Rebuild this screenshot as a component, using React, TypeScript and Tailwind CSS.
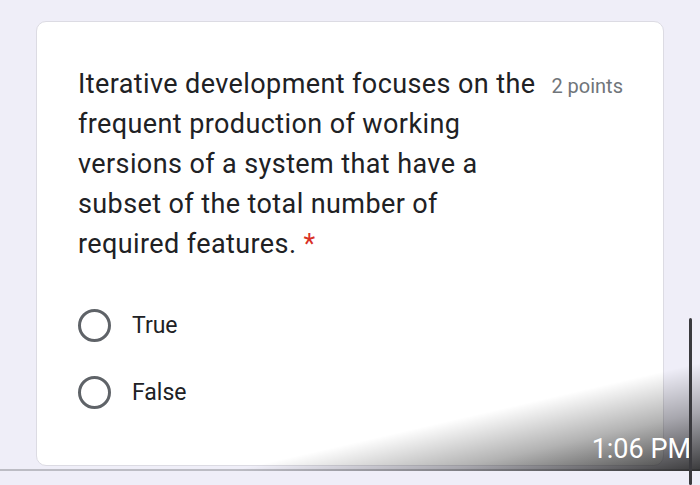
export default function App() {
  const options = ['True', 'False'];

  return (
    <div className="relative w-[700px] h-[485px] overflow-hidden bg-[#efeef8] font-['Roboto',sans-serif]">
      <div className="h-[471px] border-b-2 border-[#bcbcc4] px-[36px] pt-[21px] pb-[3px]">
        <div className="h-full rounded-[10px] border border-[#dcdbe3] bg-white pl-[41px] pr-[40px] pt-[42px]">
          <div className="flex items-baseline justify-between">
            <p className="text-[27px] leading-[40px] tracking-[0.4px] text-[#202124]">
              Iterative development focuses on the
              <br />
              frequent production of working
              <br />
              versions of a system that have a
              <br />
              subset of the total number of
              <br />
              required features. <span className="text-[#d93025]">*</span>
            </p>
            <span className="text-[20px] leading-[22px] text-[#70757a]">2 points</span>
          </div>
          <div className="mt-[45px] flex flex-col gap-[34px]">
            {options.map((opt) => (
              <div key={opt} className="flex items-center gap-[21px]">
                <div className="h-[33px] w-[33px] rounded-full border-[3px] border-[#5f6368]" />
                <span className="text-[23px] leading-[33px] text-[#202124]">{opt}</span>
              </div>
            ))}
          </div>
        </div>
      </div>

      {/* screenshot overlay */}
      <div className="pointer-events-none absolute left-0 top-[340px] h-[131px] w-[700px] bg-[linear-gradient(167deg,rgba(0,0,0,0)_63%,rgba(0,0,0,0.3)_80%,rgba(25,25,25,0.85)_100%)]" />
      <span className="absolute right-[9px] top-[433px] text-[27px] leading-[32px] text-white">1:06 PM</span>
      <div className="absolute left-[689px] top-[318px] h-[167px] w-[3px] rounded-full bg-[#3a3a3e]" />
    </div>
  );
}
